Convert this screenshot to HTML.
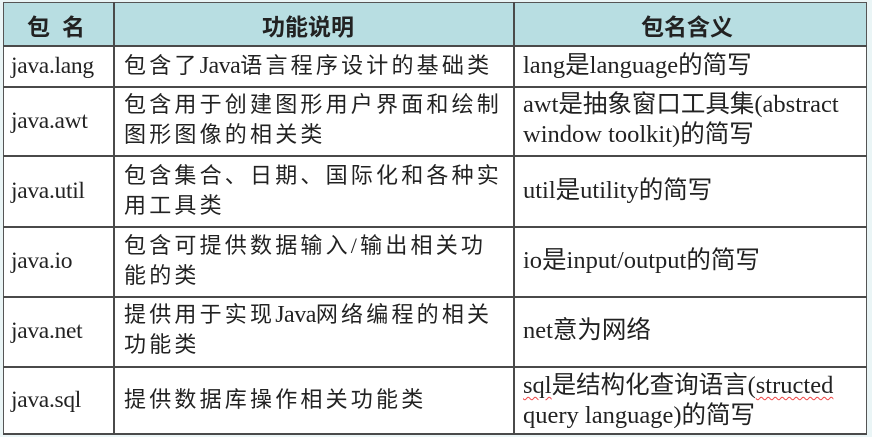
<!DOCTYPE html>
<html><head><meta charset="utf-8"><style>
body{margin:0;width:872px;height:437px;background:#eaf5f6;position:relative;overflow:hidden;font-family:"Liberation Serif","Noto Sans CJK SC",serif;color:#222}
.t{position:absolute;left:3px;top:2px;width:864px;height:432px;background:#fff;border:1.5px solid #555;box-sizing:border-box}
.hl{position:absolute;left:3px;width:864px;height:2px;background:#4a4a4a}
.vl{position:absolute;top:2px;height:433px;width:2px;background:#4a4a4a}
.c{position:absolute;font-size:22px;line-height:30px;white-space:nowrap}
.cj{font-family:"Liberation Serif","Noto Sans CJK SC",sans-serif;letter-spacing:3.2px}
.h{position:absolute;font-family:"Liberation Sans","Noto Sans CJK SC",sans-serif;font-weight:bold;font-size:23px;color:#222}
.j{letter-spacing:-0.3px;font-size:23.5px}
.r{letter-spacing:0px;font-size:24.5px}
.l{font-size:24px;letter-spacing:-0.5px}
.w{text-decoration:underline wavy #e44;text-decoration-thickness:1px;text-underline-offset:3px}
</style></head><body>
<div class="t"></div>
<div style="position:absolute;left:4px;top:3px;width:862px;height:43px;background:#b8dee2"></div>
<div class="hl" style="top:45px"></div>
<div class="hl" style="top:86px"></div>
<div class="hl" style="top:155px"></div>
<div class="hl" style="top:226px"></div>
<div class="hl" style="top:296px"></div>
<div class="hl" style="top:366px"></div>
<div class="hl" style="top:433px"></div>
<div class="vl" style="left:113px"></div>
<div class="vl" style="left:513px"></div>
<div class="h" style="left:27px;top:8px;letter-spacing:12px">包名</div>
<div class="h" style="left:262px;top:8px">功能说明</div>
<div class="h" style="left:641px;top:8px">包名含义</div>

<div class="c j" style="left:11px;top:51px">java.lang</div>
<div class="c j" style="left:11px;top:106px">java.awt</div>
<div class="c j" style="left:11px;top:176px">java.util</div>
<div class="c j" style="left:11px;top:246px">java.io</div>
<div class="c j" style="left:11px;top:316px">java.net</div>
<div class="c j" style="left:11px;top:385px">java.sql</div>

<div class="c cj" style="left:124px;top:51px">包含了<span class="l">Java</span>语言程序设计的基础类</div>
<div class="c cj" style="left:124px;top:90px">包含用于创建图形用户界面和绘制<br>图形图像的相关类</div>
<div class="c cj" style="left:124px;top:161px">包含集合、日期、国际化和各种实<br>用工具类</div>
<div class="c cj" style="left:124px;top:231px">包含可提供数据输入/输出相关功<br>能的类</div>
<div class="c cj" style="left:124px;top:300px">提供用于实现<span class="l">Java</span>网络编程的相关<br>功能类</div>
<div class="c cj" style="left:124px;top:385px">提供数据库操作相关功能类</div>

<div class="c r" style="left:523px;top:51px">lang是language的简写</div>
<div class="c r" style="left:523px;top:90px">awt是抽象窗口工具集(abstract<br>window toolkit)的简写</div>
<div class="c r" style="left:523px;top:176px">util是utility的简写</div>
<div class="c r" style="left:523px;top:246px">io是input/output的简写</div>
<div class="c r" style="left:523px;top:316px">net意为网络</div>
<div class="c r" style="left:523px;top:371px"><span class="w">sql</span>是结构化查询语言(<span class="w">structed</span><br>query language)的简写</div>
</body></html>
